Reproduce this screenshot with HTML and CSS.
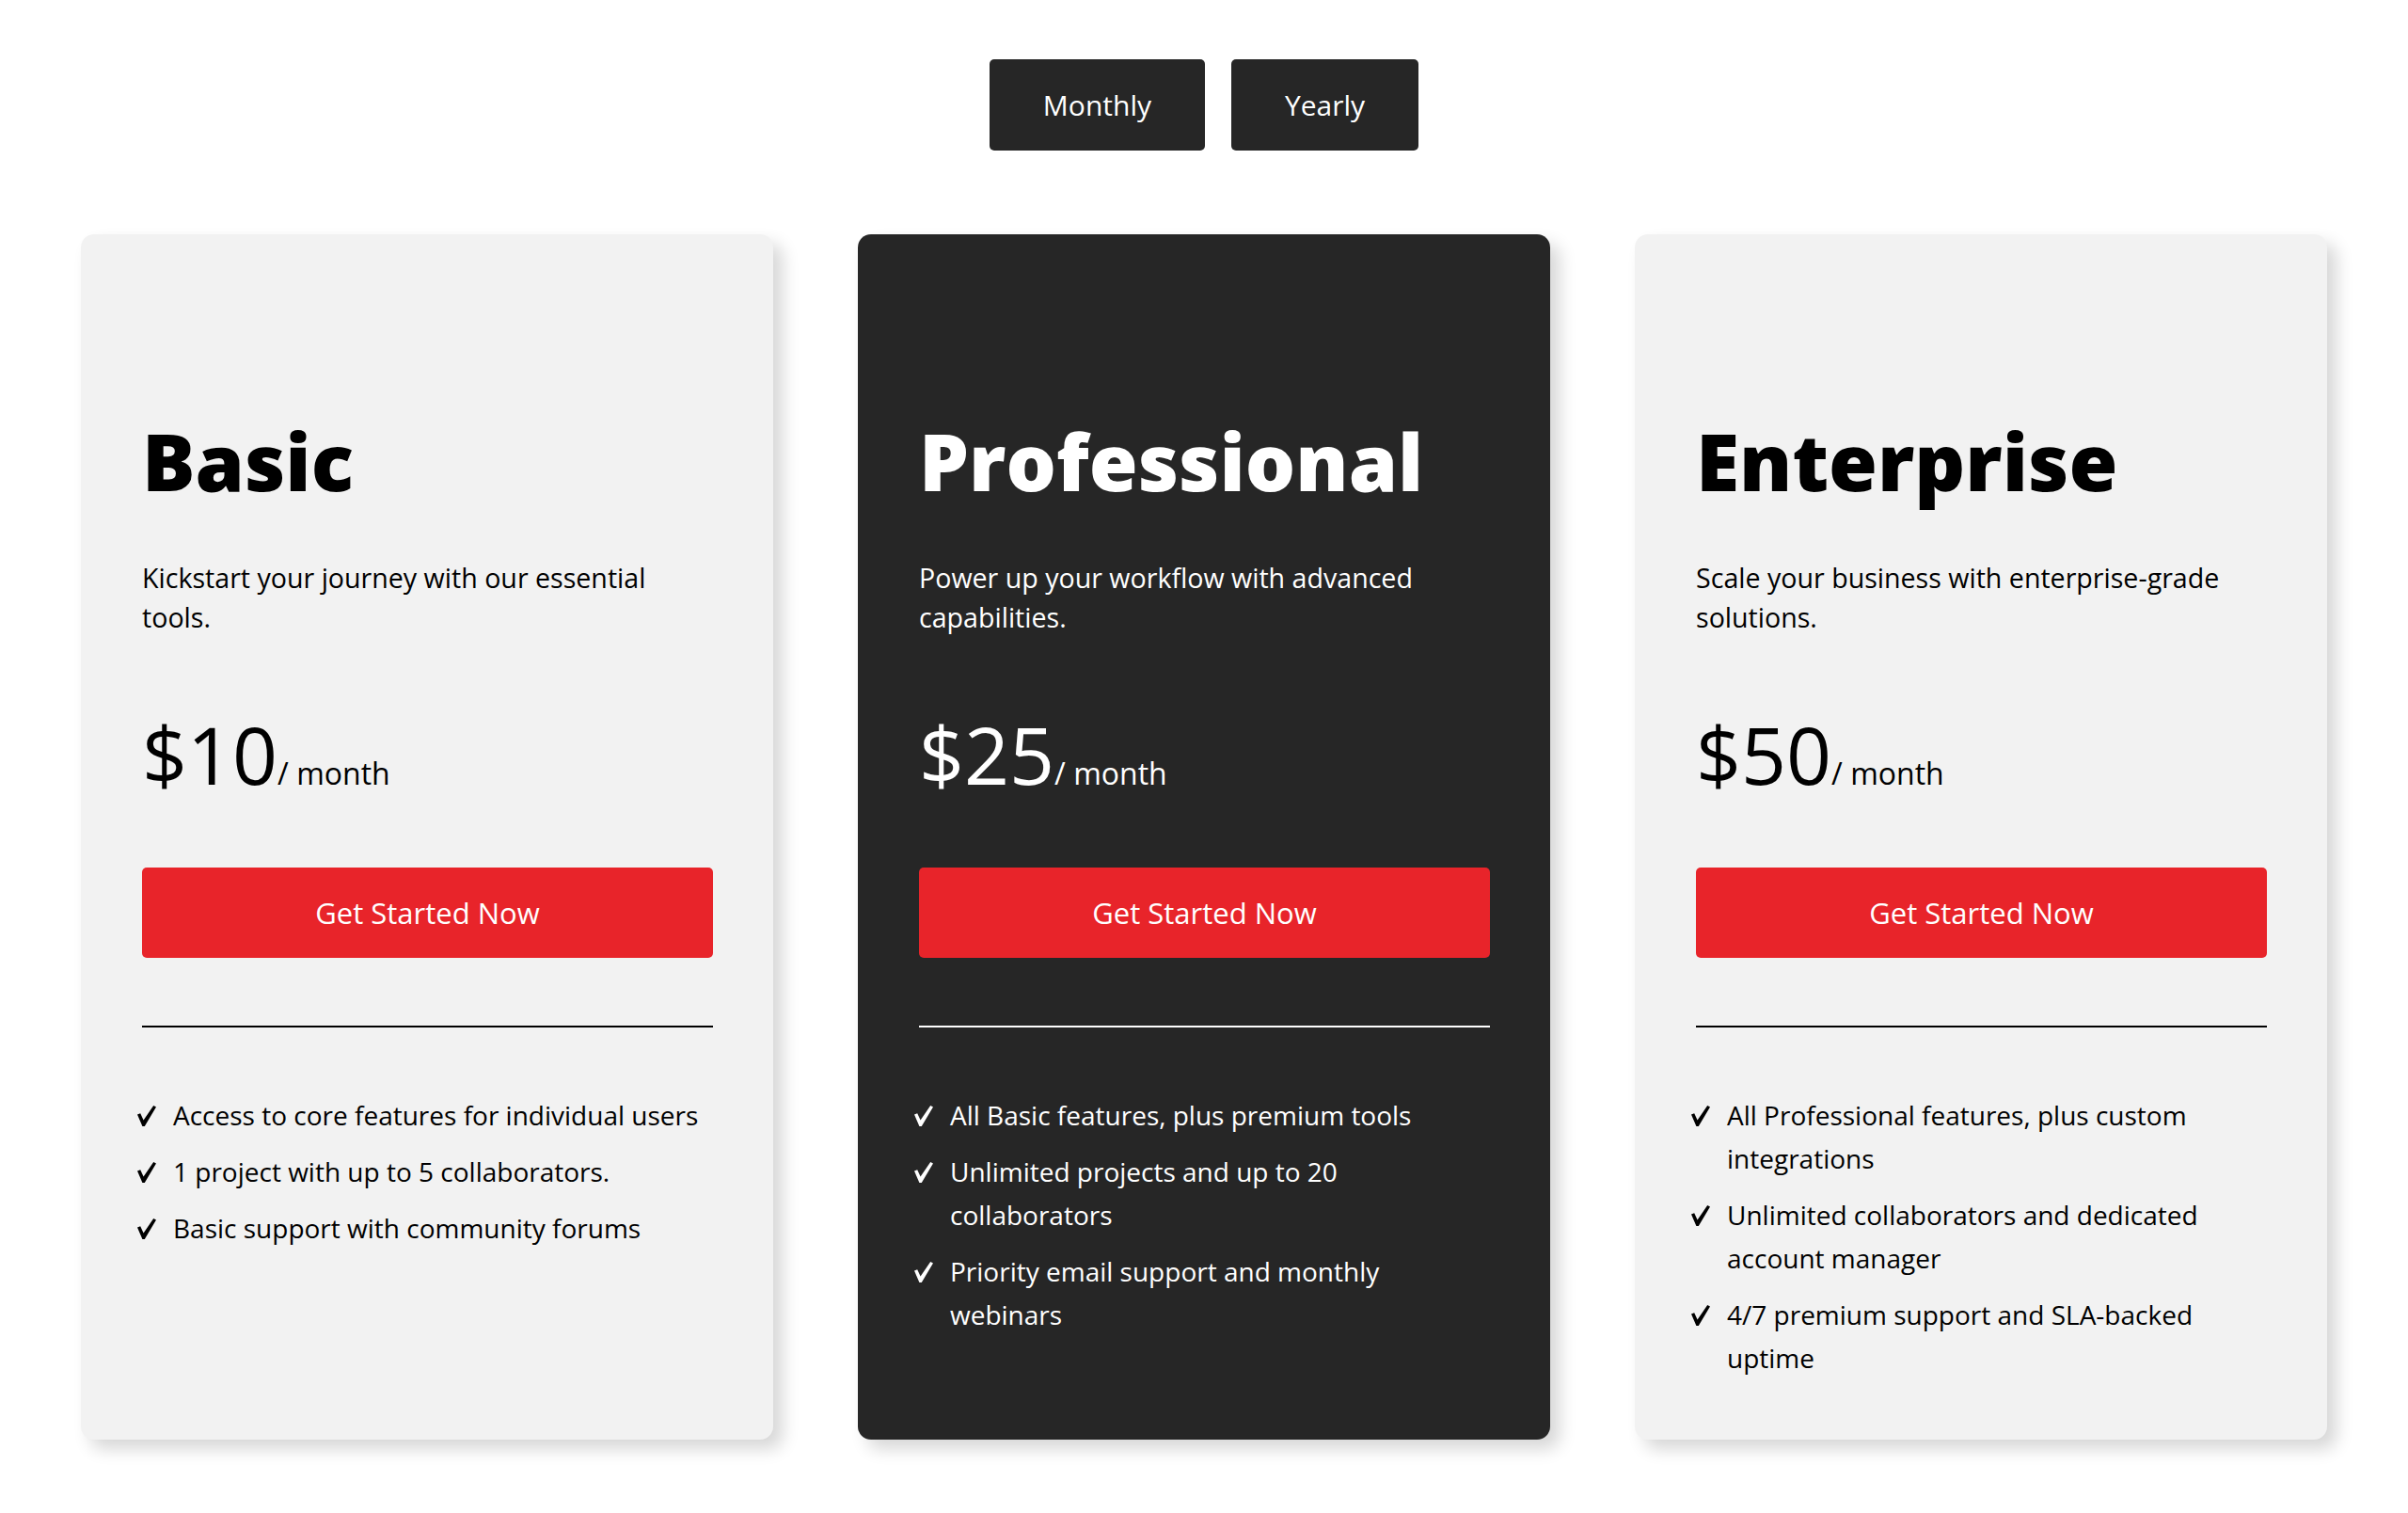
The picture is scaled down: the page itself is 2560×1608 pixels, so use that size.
FILE: index.html
```html
<!DOCTYPE html>
<html lang="en">
<head>
<meta charset="utf-8">
<title>Pricing</title>
<link rel="stylesheet" href="styles.css">
</head>
<body>
<div class="page">
  <div class="toggle">
    <button class="toggle-btn">Monthly</button>
    <button class="toggle-btn">Yearly</button>
  </div>
  <div class="plans">
    <div class="card">
      <h2 class="title">Basic</h2>
      <p class="desc">Kickstart your journey with our essential tools.</p>
      <div class="price"><span class="amount">$10</span><span class="per">/ month</span></div>
      <button class="cta">Get Started Now</button>
      <hr class="divider">
      <ul class="features">
        <li><span class="check"><svg viewBox="0 0 20 22" width="20" height="22"><path d="M0 9.5 L3.2 8.2 L6.6 15.6 L17.2 0 L20 1.6 L7.8 22 L5.4 22 Z"/></svg></span><span>Access to core features for individual users</span></li>
        <li><span class="check"><svg viewBox="0 0 20 22" width="20" height="22"><path d="M0 9.5 L3.2 8.2 L6.6 15.6 L17.2 0 L20 1.6 L7.8 22 L5.4 22 Z"/></svg></span><span>1 project with up to 5 collaborators.</span></li>
        <li><span class="check"><svg viewBox="0 0 20 22" width="20" height="22"><path d="M0 9.5 L3.2 8.2 L6.6 15.6 L17.2 0 L20 1.6 L7.8 22 L5.4 22 Z"/></svg></span><span>Basic support with community forums</span></li>
      </ul>
    </div>
    <div class="card dark">
      <h2 class="title">Professional</h2>
      <p class="desc">Power up your workflow with advanced capabilities.</p>
      <div class="price"><span class="amount">$25</span><span class="per">/ month</span></div>
      <button class="cta">Get Started Now</button>
      <hr class="divider">
      <ul class="features">
        <li><span class="check"><svg viewBox="0 0 20 22" width="20" height="22"><path d="M0 9.5 L3.2 8.2 L6.6 15.6 L17.2 0 L20 1.6 L7.8 22 L5.4 22 Z"/></svg></span><span>All Basic features, plus premium tools</span></li>
        <li><span class="check"><svg viewBox="0 0 20 22" width="20" height="22"><path d="M0 9.5 L3.2 8.2 L6.6 15.6 L17.2 0 L20 1.6 L7.8 22 L5.4 22 Z"/></svg></span><span>Unlimited projects and up to 20 collaborators</span></li>
        <li><span class="check"><svg viewBox="0 0 20 22" width="20" height="22"><path d="M0 9.5 L3.2 8.2 L6.6 15.6 L17.2 0 L20 1.6 L7.8 22 L5.4 22 Z"/></svg></span><span>Priority email support and monthly webinars</span></li>
      </ul>
    </div>
    <div class="card">
      <h2 class="title">Enterprise</h2>
      <p class="desc">Scale your business with enterprise-grade solutions.</p>
      <div class="price"><span class="amount">$50</span><span class="per">/ month</span></div>
      <button class="cta">Get Started Now</button>
      <hr class="divider">
      <ul class="features">
        <li><span class="check"><svg viewBox="0 0 20 22" width="20" height="22"><path d="M0 9.5 L3.2 8.2 L6.6 15.6 L17.2 0 L20 1.6 L7.8 22 L5.4 22 Z"/></svg></span><span>All Professional features, plus custom integrations</span></li>
        <li><span class="check"><svg viewBox="0 0 20 22" width="20" height="22"><path d="M0 9.5 L3.2 8.2 L6.6 15.6 L17.2 0 L20 1.6 L7.8 22 L5.4 22 Z"/></svg></span><span>Unlimited collaborators and dedicated account manager</span></li>
        <li><span class="check"><svg viewBox="0 0 20 22" width="20" height="22"><path d="M0 9.5 L3.2 8.2 L6.6 15.6 L17.2 0 L20 1.6 L7.8 22 L5.4 22 Z"/></svg></span><span>4/7 premium support and SLA-backed uptime</span></li>
      </ul>
    </div>
  </div>
</div>
</body>
</html>
```

FILE: styles.css
```css
* { box-sizing: border-box; }
html, body {
  margin: 0;
  padding: 0;
  background: #ffffff;
  font-family: "Open Sans", "Noto Sans", "DejaVu Sans", sans-serif;
  color: #000;
}
.page {
  padding-top: 63px;
  display: flex;
  flex-direction: column;
  align-items: center;
}
.toggle {
  display: flex;
  gap: 28px;
}
.toggle-btn {
  height: 97px;
  padding: 0 57px;
  background: #262626;
  color: #fff;
  border: none;
  border-radius: 5px;
  font-family: inherit;
  font-size: 30px;
  font-weight: 400;
}
.plans {
  margin-top: 89px;
  width: 2388px;
  display: grid;
  grid-template-columns: repeat(3, 1fr);
  gap: 90px;
  margin-bottom: 60px;
}
.card {
  background: #f2f2f2;
  border-radius: 14px;
  padding: 64px 64px 64px 65px;
  box-shadow: 10px 10px 18px rgba(0, 0, 0, 0.16);
  color: #000;
  display: flex;
  flex-direction: column;
}
.card.dark {
  background: #262626;
  color: #fff;
}
.title {
  margin: 127px 0 0;
  font-size: 84px;
  line-height: 1.2;
  font-weight: 800;
}
.desc {
  margin: 52px 0 0;
  font-size: 28.6px;
  line-height: 42px;
}
.price {
  margin-top: 75px;
  font-size: 84px;
  line-height: 1.2;
}
.per {
  font-size: 32px;
  line-height: 1;
}
.cta {
  margin-top: 69px;
  height: 96px;
  width: 100%;
  background: #e8242a;
  color: #fff;
  border: none;
  border-radius: 5px;
  font-family: inherit;
  font-size: 31px;
}
.divider {
  margin: 72px 0 0;
  border: none;
  height: 2px;
  background: #000;
}
.card.dark .divider { background: #fff; }
.features {
  list-style: none;
  margin: 70px 0 0;
  padding: 0;
  display: flex;
  flex-direction: column;
  gap: 14px;
  font-size: 28px;
  line-height: 46px;
}
.features li {
  display: flex;
}
.check {
  flex: 0 0 38px;
  margin-left: -5px;
}
.check svg {
  display: block;
  margin-top: 13px;
  fill: currentColor;
}
```
